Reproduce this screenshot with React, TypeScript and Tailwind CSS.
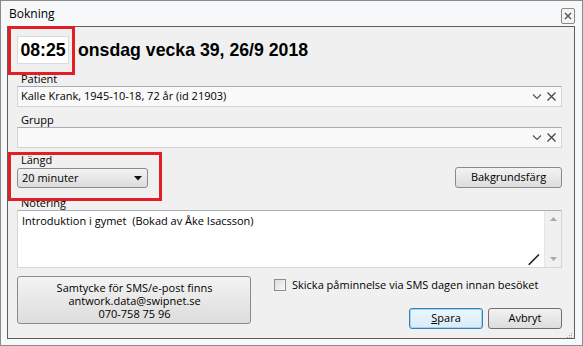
import React from 'react';

const ui = "font-['Open_Sans',sans-serif] text-[11px] text-black";

function Chevron() {
  return (
    <svg width="10" height="6" viewBox="0 0 10 6" className="text-[#555]">
      <path d="M1 0.5 L5 4.5 L9 0.5" fill="none" stroke="currentColor" strokeWidth="1.2" />
    </svg>
  );
}

function Cross() {
  return (
    <svg width="9" height="9" viewBox="0 0 9 9" className="text-[#444]">
      <path d="M0.5 0.5 L8.5 8.5 M8.5 0.5 L0.5 8.5" fill="none" stroke="currentColor" strokeWidth="1.2" />
    </svg>
  );
}

function ComboField({ text }: { text?: string }) {
  return (
    <div className="flex h-[21px] items-center border border-[#d5d5d5] border-t-[#abadb3] bg-[#f9f9f9] pl-[3px] pr-[5px]">
      <span className="flex-1 truncate">{text}</span>
      <div className="flex items-center gap-[5px]">
        <Chevron />
        <Cross />
      </div>
    </div>
  );
}

function Label({ children }: { children: React.ReactNode }) {
  return <div className="h-[14px] pl-[4px] leading-[14px]">{children}</div>;
}

export default function App() {
  return (
    <div className={`relative h-[346px] w-[583px] overflow-hidden border border-[#8a8a8a] bg-[#f7f8f9] ${ui}`}>
      {/* Title bar */}
      <div className="flex h-[25px] items-center justify-between pl-[8px] pr-[7px]">
        <span className="text-[12px]">Bokning</span>
        <div className="mt-[4px] flex h-[16px] w-[14px] items-center justify-center rounded-[2px] border border-[#8a8a8a] bg-[#f4f4f4]">
          <svg width="8" height="8" viewBox="0 0 8 8">
            <path d="M1 1 L7 7 M7 1 L1 7" stroke="#555" strokeWidth="1.4" />
          </svg>
        </div>
      </div>

      {/* Inner panel */}
      <div className="ml-[6px] mr-[7px] flex h-[313px] flex-col border border-[#5f5f5f] bg-[#f0f0f0] pl-[9px] pr-[12px] pt-[9px]">
        <div className="flex items-center gap-[9px]">
          <div className="flex h-[28px] w-[52px] items-center justify-center border border-[#dadada] bg-white font-['Liberation_Sans',sans-serif] text-[17.7px] font-bold">
            08:25
          </div>
          <div className="font-['Liberation_Sans',sans-serif] text-[17.7px] font-bold">onsdag vecka 39, 26/9 2018</div>
        </div>

        <div className="mt-[8px]">
          <Label>Patient</Label>
          <ComboField text="Kalle Krank, 1945-10-18, 72 år (id 21903)" />
        </div>

        <div className="mt-[6px]">
          <Label>Grupp</Label>
          <ComboField />
        </div>

        <div className="mt-[5px] flex items-end justify-between">
          <div>
            <Label>Längd</Label>
            <div className="mt-[1px] flex h-[20px] w-[131px] items-center justify-between rounded-[3px] border border-[#8b8b8b] bg-gradient-to-b from-[#f3f3f3] to-[#dcdcdc] pl-[4px] pr-[5px]">
              <span>20 minuter</span>
              <svg width="8" height="5" viewBox="0 0 8 5">
                <path d="M0 0 H8 L4 4.5 Z" fill="#111" />
              </svg>
            </div>
          </div>
          <button className="flex h-[21px] w-[107px] items-center justify-center rounded-[3px] border border-[#8b8b8b] bg-gradient-to-b from-[#f3f3f3] to-[#dddddd]">
            Bakgrundsfärg
          </button>
        </div>

        <div className="mt-[8px]">
          <Label>Notering</Label>
          <div className="relative h-[58px] border border-[#d5d5d5] border-t-[#abadb3] bg-white pl-[4px] pt-[2px]">
            <span className="whitespace-pre">Introduktion i gymet  (Bokad av Åke Isacsson)</span>
            <svg className="absolute bottom-[2px] right-[21px]" width="12" height="12" viewBox="0 0 12 12">
              <path d="M1 11.5 L11 1.5" stroke="#222" strokeWidth="1.6" />
              <path d="M0.5 11.5 L2 11" stroke="#222" strokeWidth="1" />
            </svg>
            <div className="absolute bottom-0 right-0 top-0 flex w-[17px] flex-col items-center justify-between border-l border-[#e6e6e6] bg-[#f0f0f0] py-[6px]">
              <svg width="7" height="4" viewBox="0 0 7 4">
                <path d="M0 4 L3.5 0 L7 4 Z" fill="#a8a8a8" />
              </svg>
              <svg width="7" height="4" viewBox="0 0 7 4">
                <path d="M0 0 H7 L3.5 4 Z" fill="#a8a8a8" />
              </svg>
            </div>
          </div>
        </div>

        <div className="mt-[8px] flex">
          <button className="flex h-[48px] w-[234px] flex-col items-center justify-center rounded-[3px] border border-[#8b8b8b] bg-gradient-to-b from-[#f3f3f3] to-[#dddddd] pl-[1px]">
            <span className="h-[13px] leading-[13px]">Samtycke för SMS/e-post finns</span>
            <span className="h-[13px] leading-[13px]">antwork.data@swipnet.se</span>
            <span className="h-[13px] leading-[13px]">070-758 75 96</span>
          </button>
          <div className="ml-[23px] flex flex-1 flex-col">
            <div className="mt-[1px] flex items-center gap-[6px]">
              <div className="h-[12px] w-[12px] border border-[#8f8f8f] bg-gradient-to-br from-[#dcdcdc] to-[#fbfbfb]" />
              <span>Skicka påminnelse via SMS dagen innan besöket</span>
            </div>
            <div className="mt-[14px] flex justify-end gap-[5px]">
              <button className="flex h-[21px] w-[74px] items-center justify-center rounded-[3px] border border-[#3c7fb1] bg-gradient-to-b from-[#eaf6fd] to-[#d9ecf7] shadow-[inset_0_0_0_1px_#9fd5f3]">
                <span><span className="underline">S</span>para</span>
              </button>
              <button className="flex h-[21px] w-[74px] items-center justify-center rounded-[3px] border border-[#707070] bg-gradient-to-b from-[#f2f2f2] to-[#dddddd]">
                Avbryt
              </button>
            </div>
          </div>
        </div>
      </div>

      {/* resize grip */}
      <div className="absolute bottom-[7px] right-[10px] grid grid-cols-3 gap-[1px]">
        <span className="h-[1px] w-[1px]" />
        <span className="h-[1px] w-[1px]" />
        <span className="h-[1px] w-[1px] bg-[#9a9a9a]" />
        <span className="h-[1px] w-[1px]" />
        <span className="h-[1px] w-[1px] bg-[#9a9a9a]" />
        <span className="h-[1px] w-[1px] bg-[#9a9a9a]" />
        <span className="h-[1px] w-[1px] bg-[#9a9a9a]" />
        <span className="h-[1px] w-[1px] bg-[#9a9a9a]" />
        <span className="h-[1px] w-[1px] bg-[#9a9a9a]" />
      </div>

      {/* red annotation boxes */}
      <div className="pointer-events-none absolute left-[7px] top-[25px] h-[49px] w-[67px] border-[3px] border-[#e31e24]" />
      <div className="pointer-events-none absolute left-[7px] top-[151px] h-[49px] w-[154px] border-[3px] border-[#e31e24]" />
    </div>
  );
}
